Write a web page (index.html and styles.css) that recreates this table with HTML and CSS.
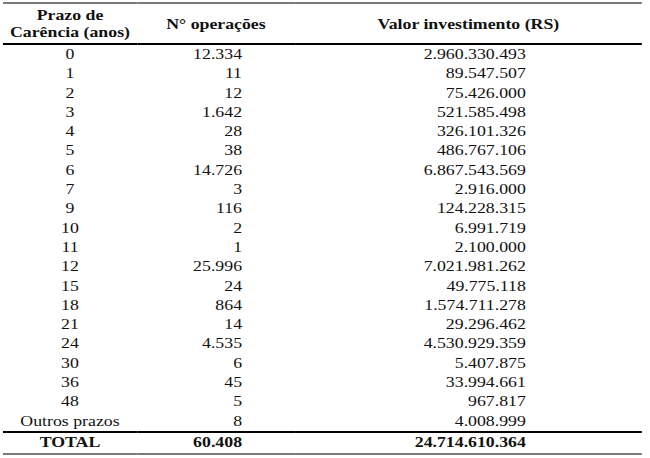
FILE: index.html
```html
<!DOCTYPE html>
<html lang="pt">
<head>
<meta charset="utf-8">
<link rel="stylesheet" href="styles.css">
</head>
<body>
<div class="sheet">
<table class="data">
  <colgroup>
    <col class="c1"><col class="c2"><col class="c3">
  </colgroup>
  <thead>
    <tr class="head">
      <th>Prazo de<br>Carência (anos)</th>
      <th>N° operações</th>
      <th>Valor investimento (RS)</th>
    </tr>
  </thead>
  <tbody>
    <tr><td>0</td><td class="ops">12.334</td><td class="val">2.960.330.493</td></tr>
    <tr><td>1</td><td class="ops">11</td><td class="val">89.547.507</td></tr>
    <tr><td>2</td><td class="ops">12</td><td class="val">75.426.000</td></tr>
    <tr><td>3</td><td class="ops">1.642</td><td class="val">521.585.498</td></tr>
    <tr><td>4</td><td class="ops">28</td><td class="val">326.101.326</td></tr>
    <tr><td>5</td><td class="ops">38</td><td class="val">486.767.106</td></tr>
    <tr><td>6</td><td class="ops">14.726</td><td class="val">6.867.543.569</td></tr>
    <tr><td>7</td><td class="ops">3</td><td class="val">2.916.000</td></tr>
    <tr><td>9</td><td class="ops">116</td><td class="val">124.228.315</td></tr>
    <tr><td>10</td><td class="ops">2</td><td class="val">6.991.719</td></tr>
    <tr><td>11</td><td class="ops">1</td><td class="val">2.100.000</td></tr>
    <tr><td>12</td><td class="ops">25.996</td><td class="val">7.021.981.262</td></tr>
    <tr><td>15</td><td class="ops">24</td><td class="val">49.775.118</td></tr>
    <tr><td>18</td><td class="ops">864</td><td class="val">1.574.711.278</td></tr>
    <tr><td>21</td><td class="ops">14</td><td class="val">29.296.462</td></tr>
    <tr><td>24</td><td class="ops">4.535</td><td class="val">4.530.929.359</td></tr>
    <tr><td>30</td><td class="ops">6</td><td class="val">5.407.875</td></tr>
    <tr><td>36</td><td class="ops">45</td><td class="val">33.994.661</td></tr>
    <tr><td>48</td><td class="ops">5</td><td class="val">967.817</td></tr>
    <tr><td>Outros prazos</td><td class="ops">8</td><td class="val">4.008.999</td></tr>
  </tbody>
  <tfoot>
    <tr class="total"><td>TOTAL</td><td class="ops">60.408</td><td class="val">24.714.610.364</td></tr>
  </tfoot>
</table>
</div>
</body>
</html>
```

FILE: styles.css
```css
html, body {
  margin: 0;
  padding: 0;
  background: #fff;
}

.sheet {
  width: 503px;
  margin: 2px 0 0 3px;
  transform: scaleX(1.27);
  transform-origin: 0 0;
  font-family: "Liberation Serif", "Times New Roman", serif;
  font-size: 14px;
  color: #111;
}

.data {
  width: 503px;
  border-collapse: collapse;
  table-layout: fixed;
}

.c1 { width: 105.5px; }
.c2 { width: 124.4px; }
.c3 { width: 273.1px; }

.data th,
.data td {
  padding: 0;
  text-align: center;
  white-space: nowrap;
}

.head {
  border-top: 2px solid #7a7a7a;
  border-bottom: 2px solid #000;
}

.head th {
  height: 38px;
  line-height: 17px;
  font-weight: bold;
  vertical-align: middle;
  padding-top: 1px;
}

.data tbody td {
  height: 19.3px;
  line-height: 19.3px;
}

.data td.ops {
  text-align: right;
  padding-right: 41.7px;
}

.data td.val {
  text-align: right;
  padding-right: 91.3px;
}

.total {
  border-top: 2px solid #000;
  border-bottom: 2px solid #7a7a7a;
}

.total td {
  height: 20px;
  line-height: 20px;
  font-weight: bold;
}
```
